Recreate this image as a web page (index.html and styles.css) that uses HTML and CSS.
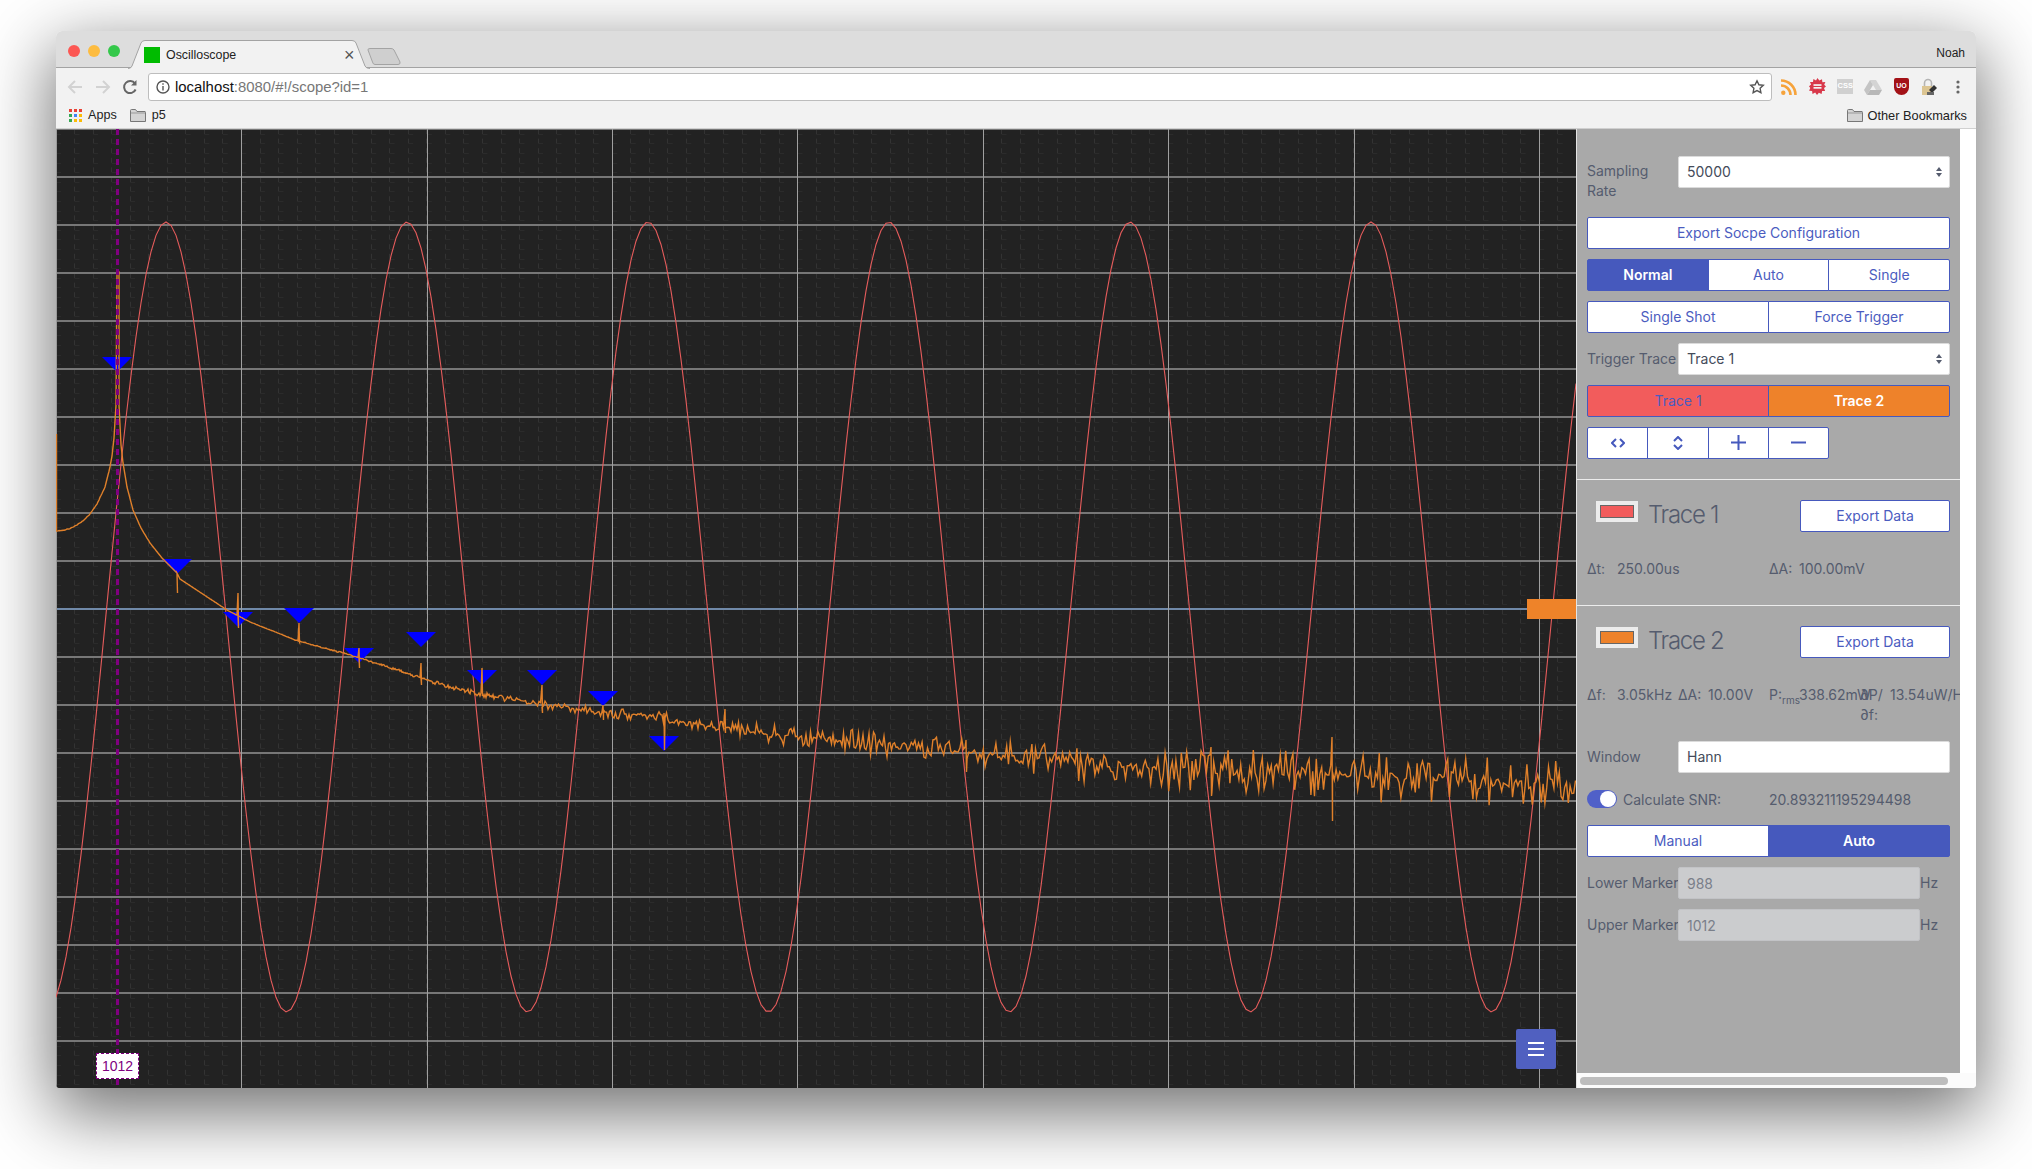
FILE: index.html

```html
<!DOCTYPE html>
<html lang="en">
<head>
  <meta charset="UTF-8" />
  <title>Oscilloscope</title>
  <link rel="stylesheet" href="styles.css">
</head>
<body>

  <div class="window">

    <!-- Tab strip -->
    <div class="tabstrip">
      <div class="lights">
        <span class="light red"></span>
        <span class="light yellow"></span>
        <span class="light green"></span>
      </div>
      <div class="tab">
        <svg class="tab-shape" width="242" height="29" viewBox="0 0 242 29">
          <path d="M0 28.5 Q3 28.5 4 26 L13 3 Q14 .5 17 .5 L224 .5 Q227 .5 228 3 L237 26 Q238 28.5 242 28.5" fill="#f2f2f2" stroke="#a3a3a3" />
        </svg>
        <span class="favicon"></span>
        <span class="tab-title">Oscilloscope</span>
        <span class="tab-close">×</span>
      </div>
      <svg class="new-tab" width="34" height="17" viewBox="0 0 34 17">
        <path d="M1 2 Q.6 .5 3 .5 L24 .5 Q26 .5 27 2 L33 14 Q33.6 16.5 31 16.5 L8 16.5 Q6 16.5 5.5 14 Z" fill="#cfcfcf" stroke="#a3a3a3" />
      </svg>
      <span class="profile">Noah</span>
    </div>

    <!-- Address bar -->
    <div class="toolbar">
      <div class="nav">
        <svg width="18" height="18" viewBox="0 0 18 18" fill="none" stroke="#d2d2d2" stroke-width="2"><path d="M16 9H3M9 3L3 9l6 6" /></svg>
        <svg width="18" height="18" viewBox="0 0 18 18" fill="none" stroke="#d2d2d2" stroke-width="2"><path d="M2 9h13M9 3l6 6-6 6" /></svg>
        <svg width="18" height="18" viewBox="0 0 18 18" fill="none" stroke="#666" stroke-width="2"><path d="M14.6 11.5A6 6 0 1 1 14 5.6" /><path d="M15.5 2v5.5H10" fill="#666" stroke="none" /></svg>
      </div>
      <div class="omnibox">
        <svg width="14" height="14" viewBox="0 0 14 14" fill="none" stroke="#555" stroke-width="1.4"><circle cx="7" cy="7" r="6" /><path d="M7 6v4.5M7 3.2v1.6" /></svg>
        <span class="url"><b>localhost</b>:8080/#!/scope?id=1</span>
        <svg class="star" width="16" height="16" viewBox="0 0 16 16" fill="none" stroke="#555" stroke-width="1.4"><path d="M8 1.8l1.9 4 4.4.5-3.2 3 .8 4.4L8 11.6l-3.9 2.1.8-4.4-3.2-3 4.4-.5z" /></svg>
      </div>
      <div class="extensions">
        <svg width="16" height="16" viewBox="0 0 16 16" fill="none" stroke="#f6a33b" stroke-width="2.6"><path d="M0 6.5A9.5 9.5 0 0 1 9.5 16M0 1.5A14.5 14.5 0 0 1 14.5 16" /><circle cx="2.3" cy="13.7" r="2.2" fill="#f6a33b" stroke="none" /></svg>
        <svg width="17" height="17" viewBox="0 0 17 17"><path d="M8.5 0l1.8 2.6L13 1.2l.4 3 3-.2-1.2 2.8 1.8 1.7-2 1.6 1.1 2.8-3 .1-.5 3-2.7-1.3-1.9 2.3-1.8-2.4-2.7 1.3-.4-3-3-.2 1.2-2.8L0 8.3l2.1-1.7L1 3.9l3 .1.4-3L7 2.5z" fill="#d8384a" /><rect x="4.5" y="6.2" width="8" height="1.7" fill="#f4f4f4" /><rect x="4.5" y="9" width="8" height="1.7" fill="#f4f4f4" /></svg>
        <span class="ext-css">CSS</span>
        <svg width="18" height="16" viewBox="0 0 18 16"><path d="M6 1h6l6 10h-6z" fill="#d4d4d4" /><path d="M6 1l3 5-6 10-3-5z" fill="#c4c4c4" /><path d="M6 11h12l-3 5H3z" fill="#b8b8b8" /></svg>
        <span class="ext-shield">UO</span>
        <svg width="17" height="18" viewBox="0 0 17 18"><path d="M3.5 8V5a3.5 3.5 0 0 1 7 0v3" fill="none" stroke="#b4b4b4" stroke-width="1.6" /><rect x="1" y="8" width="10" height="9" fill="#dcc592" /><path d="M8 12l5-5 3 3-5 5z" fill="#333" /><rect x="6" y="14" width="7" height="3" fill="#666" /></svg>
        <svg width="4" height="14" viewBox="0 0 4 14" fill="#666"><circle cx="2" cy="2" r="1.6" /><circle cx="2" cy="7" r="1.6" /><circle cx="2" cy="12" r="1.6" /></svg>
      </div>
    </div>

    <!-- Bookmarks -->
    <div class="bookmarks">
      <span class="bookmark">
        <svg width="13" height="13" viewBox="0 0 13 13">
          <rect width="3" height="3" fill="#e94235" /><rect x="5" width="3" height="3" fill="#e94235" /><rect x="10" width="3" height="3" fill="#e94235" />
          <rect y="5" width="3" height="3" fill="#34a853" /><rect x="5" y="5" width="3" height="3" fill="#4285f4" /><rect x="10" y="5" width="3" height="3" fill="#fbbc05" />
          <rect y="10" width="3" height="3" fill="#34a853" /><rect x="5" y="10" width="3" height="3" fill="#fbbc05" /><rect x="10" y="10" width="3" height="3" fill="#fbbc05" />
        </svg>
        Apps
      </span>
      <span class="bookmark">
        <svg width="16" height="13" viewBox="0 0 16 13"><path d="M.5 12.5V1.5Q.5.5 1.5.5h4l1.5 2h8q.5 0 .5 1v9z" fill="#d4d4d4" stroke="#777" /><path d="M1 4h14" stroke="#999" /></svg>
        p5
      </span>
      <span class="bookmark other">
        <svg width="16" height="13" viewBox="0 0 16 13"><path d="M.5 12.5V1.5Q.5.5 1.5.5h4l1.5 2h8q.5 0 .5 1v9z" fill="#d4d4d4" stroke="#777" /><path d="M1 4h14" stroke="#999" /></svg>
        Other Bookmarks
      </span>
    </div>

    <div class="app">

      <!-- Scope display -->
      <div class="scope">
        <canvas id="scope" width="1520" height="959"></canvas>
        <div class="marker-label">1012</div>
        <div class="trigger-handle"></div>
        <button class="menu-btn">
          <svg width="16" height="14" viewBox="0 0 16 14" fill="none" stroke="#fff" stroke-width="2"><path d="M0 1h16M0 7h16M0 13h16" /></svg>
        </button>
      </div>

      <!-- Settings -->
      <div class="side">
        <div class="side-body">
          <div class="panel">

            <div class="section section-top">
              <div class="row row-tall">
                <label class="label">Sampling Rate</label>
                <div class="select">50000</div>
              </div>
              <div class="row"><button class="btn">Export Socpe Configuration</button></div>
              <div class="row">
                <button class="btn active">Normal</button>
                <button class="btn">Auto</button>
                <button class="btn">Single</button>
              </div>
              <div class="row">
                <button class="btn">Single Shot</button>
                <button class="btn">Force Trigger</button>
              </div>
              <div class="row">
                <label class="label nowrap">Trigger Trace</label>
                <div class="select">Trace 1</div>
              </div>
              <div class="row">
                <button class="btn trace-red">Trace 1</button>
                <button class="btn trace-orange">Trace 2</button>
              </div>
              <div class="row row-icons">
                <button class="btn">
                  <svg width="14" height="10" viewBox="0 0 14 10" fill="none" stroke="#4659bd" stroke-width="2"><path d="M5 1L1 5l4 4M9 1l4 4-4 4" /></svg>
                </button>
                <button class="btn">
                  <svg width="10" height="14" viewBox="0 0 10 14" fill="none" stroke="#4659bd" stroke-width="2"><path d="M1 5l4-4 4 4M1 9l4 4 4-4" /></svg>
                </button>
                <button class="btn">
                  <svg width="15" height="15" viewBox="0 0 15 15" fill="none" stroke="#4659bd" stroke-width="2"><path d="M0 7.5h15M7.5 0v15" /></svg>
                </button>
                <button class="btn">
                  <svg width="15" height="3" viewBox="0 0 15 3" fill="none" stroke="#4659bd" stroke-width="2"><path d="M0 1.5h15" /></svg>
                </button>
              </div>
            </div>

            <div class="section section-trace1">
              <div class="trace-head">
                <span class="swatch swatch-red"></span>
                <h2>Trace 1</h2>
                <button class="btn btn-export">Export Data</button>
              </div>
              <div class="stats">
                <span class="stat-key">Δt:</span><span class="stat-val">250.00us</span>
                <span class="stat-key stat-skip">ΔA:</span><span class="stat-val">100.00mV</span>
              </div>
            </div>

            <div class="section section-trace2">
              <div class="trace-head">
                <span class="swatch swatch-orange"></span>
                <h2>Trace 2</h2>
                <button class="btn btn-export">Export Data</button>
              </div>
              <div class="stats">
                <span class="stat-key">Δf:</span><span class="stat-val">3.05kHz</span>
                <span class="stat-key">ΔA:</span><span class="stat-val">10.00V</span>
                <span class="stat-key">P:<sub>rms</sub></span><span class="stat-val">338.62mW</span>
                <span class="stat-key">∂P/∂f:</span><span class="stat-val">13.54uW/Hz</span>
              </div>
              <div class="row">
                <label class="label">Window</label>
                <div class="select plain">Hann</div>
              </div>
              <div class="row row-snr">
                <span class="switch"></span>
                <span class="snr-label">Calculate SNR:</span>
                <span class="snr-val">20.893211195294498</span>
              </div>
              <div class="row">
                <button class="btn">Manual</button>
                <button class="btn active">Auto</button>
              </div>
              <div class="row">
                <label class="label nowrap">Lower Marker</label>
                <input class="marker-input" value="988" disabled />
                <span class="unit">Hz</span>
              </div>
              <div class="row">
                <label class="label nowrap">Upper Marker</label>
                <input class="marker-input" value="1012" disabled />
                <span class="unit">Hz</span>
              </div>
            </div>

          </div>
          <div class="gutter"></div>
        </div>
        <div class="hscroll"><div class="hscroll-thumb"></div></div>
      </div>

    </div>
  </div>

  <script src="script.js"></script>
</body>
</html>
```

FILE: styles.css

```css
* { margin: 0; padding: 0; box-sizing: border-box; }
html, body {
  height: 100%;
  overflow: hidden;
  background: #fff;
}
body {
  padding: 31px 56px 0;
  font-family: "Liberation Sans", Arial, sans-serif;
}
.window {
  width: 1920px;
  height: 1057px;
  border-radius: 6px 6px 4px 4px;
  overflow: hidden;
  box-shadow: 0 22px 70px 4px rgba(0, 0, 0, 0.56);
}

/* browser chrome */
.tabstrip {
  display: flex;
  align-items: flex-start;
  height: 37px;
  background: #dddddd;
  border-bottom: 1px solid #a3a3a3;
}
.lights {
  display: flex;
  gap: 8px;
  padding: 14px 0 0 12px;
}
.light {
  width: 12px;
  height: 12px;
  border-radius: 50%;
}
.light.red { background: #fc5753; }
.light.yellow { background: #fdbc40; }
.light.green { background: #34c84a; }
.tab {
  position: relative;
  display: flex;
  align-items: center;
  width: 242px;
  height: 29px;
  margin: 9px 0 0 8px;
  padding: 0 0 0 16px;
  font-size: 12.4px;
  color: #222;
}
.tab-shape {
  position: absolute;
  top: 0; left: 0;
}
.favicon {
  position: relative;
  width: 16px;
  height: 16px;
  background: #00bb00;
}
.tab-title {
  position: relative;
  margin-left: 6px;
}
.tab-close {
  position: absolute;
  left: 216px;
  top: 5px;
  font-size: 18px;
  line-height: 20px;
  color: #555;
}
.new-tab {
  margin: 17px 0 0 -3px;
}
.profile {
  margin-left: auto;
  padding: 15px 11px 0 0;
  font-size: 12px;
  color: #222;
}
.toolbar {
  display: flex;
  align-items: center;
  height: 37px;
  background: #f2f2f2;
}
.nav {
  display: flex;
  align-items: center;
  gap: 10px;
  width: 92px;
  padding-left: 10px;
}
.nav svg:last-child { margin-left: -1px; }
.omnibox {
  display: flex;
  align-items: center;
  gap: 5px;
  width: 1624px;
  height: 28px;
  padding: 0 6px 0 7px;
  background: #fff;
  border: 1px solid #bdbdbd;
  border-radius: 3px;
}
.url {
  font-size: 14.9px;
  color: #777;
}
.url b {
  font-weight: normal;
  color: #111;
}
.star { margin-left: auto; }
.extensions {
  display: grid;
  grid-template-columns: repeat(7, 28.1px);
  justify-items: center;
  align-items: center;
  flex: none;
  padding-left: 3px;
}
.ext-css {
  width: 16px;
  height: 15px;
  background: #d0d0d0;
  color: #fff;
  font-size: 7.5px;
  font-weight: bold;
  line-height: 14px;
  text-align: center;
}
.ext-shield {
  width: 15px;
  height: 17px;
  background: #a31217;
  border-radius: 2px 2px 8px 8px;
  color: #fff;
  font-size: 7px;
  font-weight: bold;
  line-height: 15px;
  text-align: center;
}
.bookmarks {
  display: flex;
  align-items: center;
  gap: 13px;
  height: 24px;
  padding: 0 9px 3px 13px;
  background: #f2f2f2;
  border-bottom: 1px solid #d0d0d0;
  font-size: 12.6px;
  color: #222;
}
.bookmark {
  display: flex;
  align-items: center;
  gap: 6px;
}
.bookmark.other {
  margin-left: auto;
  gap: 4px;
  font-size: 12.8px;
}

/* main area */
.app {
  display: flex;
  height: 959px;
}
.scope {
  position: relative;
  width: 1520px;
  height: 959px;
  background: #222;
}
.scope canvas { display: block; }
.marker-label {
  position: absolute;
  left: 40px;
  top: 924px;
  width: 43px;
  height: 26px;
  background: #fff;
  border: 1px dashed #800080;
  color: #800080;
  font-size: 14px;
  line-height: 25px;
  text-align: center;
}
.trigger-handle {
  position: absolute;
  right: 0;
  top: 470px;
  width: 49px;
  height: 20px;
  background: #ee8329;
}
.menu-btn {
  position: absolute;
  left: 1460px;
  top: 900px;
  display: flex;
  align-items: center;
  justify-content: center;
  width: 40px;
  height: 40px;
  background: #5060c0;
  border: none;
  border-radius: 2px;
}

/* settings panel */
.side {
  display: flex;
  flex-direction: column;
  width: 400px;
  background: #fbfbfb;
  border-left: 1px solid #e4e4e4;
}
.side-body {
  display: flex;
  height: 944px;
}
.panel {
  width: 383px;
  height: 944px;
  overflow: hidden;
  background: #a9a9a9;
  font-family: Inter, "Liberation Sans", sans-serif;
  font-size: 14px;
  color: #555c6e;
}
.gutter {
  flex: 1;
  background: #fff;
}
.hscroll {
  padding: 4px 28px 0 3px;
}
.hscroll-thumb {
  height: 8px;
  background: #bdbdbd;
  border-radius: 4px;
}
.section {
  width: 383px;
  padding: 20px 10px 10px;
  border-bottom: 1px solid #ececec;
}
.section-top {
  height: 351px;
  padding-top: 27px;
}
.section-trace1 { height: 126px; }
.section-trace2 { border-bottom: none; }
.row {
  display: flex;
  align-items: flex-start;
  height: 32px;
  margin-bottom: 10px;
}
.row-tall { height: 51px; }
.label {
  flex: none;
  width: 91px;
  padding-top: 6px;
  line-height: 20px;
}
.row-tall .label { padding-top: 5px; }
.nowrap {
  white-space: nowrap;
}
.select {
  position: relative;
  flex: 1;
  height: 32px;
  padding-left: 8px;
  background: #fff;
  border: 1px solid #dbdbdb;
  border-radius: 2px;
  color: #444b5a;
  line-height: 29px;
}
.select::before,
.select::after {
  content: "";
  position: absolute;
  right: 7px;
  border-left: 3.5px solid transparent;
  border-right: 3.5px solid transparent;
}
.select::before {
  top: 10px;
  border-bottom: 4px solid #555c6e;
}
.select::after {
  top: 16px;
  border-top: 4px solid #555c6e;
}
.select.plain::before,
.select.plain::after { display: none; }
.btn {
  display: flex;
  align-items: center;
  justify-content: center;
  flex: 1;
  height: 32px;
  padding-bottom: 1px;
  background: #fff;
  border: 1px solid #4659bd;
  margin-left: -1px;
  font-family: inherit;
  font-size: 14px;
  color: #4b5cc0;
}
.btn:first-child {
  margin-left: 0;
  border-radius: 2px 0 0 2px;
}
.btn:last-child { border-radius: 0 2px 2px 0; }
.btn:only-child { border-radius: 2px; }
.btn.active {
  background: #4659bd;
  color: #fff;
  font-weight: 600;
}
.btn.trace-red { background: #f25c5c; }
.btn.trace-orange {
  background: #ee822a;
  color: #fff;
  font-weight: 600;
}
.row-icons { width: 242px; }
.trace-head {
  display: flex;
  align-items: flex-start;
  height: 32px;
}
.swatch {
  width: 42px;
  height: 21px;
  margin: 1px 0 0 9px;
  border: 4px solid #ececec;
  box-shadow: inset 0 0 0 1px #666;
}
.swatch-red { background: #f25c5c; }
.swatch-orange { background: #ee822a; }
.trace-head h2 {
  margin-left: 10px;
  font-size: 24px;
  font-weight: 300;
  line-height: 30px;
  letter-spacing: -1.3px;
  color: #555c6e;
}
.btn.btn-export {
  flex: none;
  width: 150px;
  margin-left: auto;
  border-radius: 2px;
}
.stats {
  display: flex;
  width: 372px;
  margin: 27px 0 16px;
  line-height: 20px;
  white-space: normal;
}
.stat-key {
  flex: none;
  width: 30px;
}
.stat-key sub {
  font-size: 10px;
  line-height: 0;
}
.stat-val {
  flex: none;
  width: 61px;
  white-space: nowrap;
}
.stat-skip { margin-left: 91px; }
.row-snr {
  align-items: center;
  height: 18px;
  margin: 17px 0;
}
.switch {
  position: relative;
  width: 30px;
  height: 18px;
  background: #5060c8;
  border-radius: 9px;
}
.switch::after {
  content: "";
  position: absolute;
  top: 1px;
  right: 1px;
  width: 16px;
  height: 16px;
  background: #fff;
  border-radius: 50%;
}
.snr-label {
  width: 146px;
  margin-left: 6px;
}
.marker-input {
  width: 242px;
  height: 32px;
  padding-left: 8px;
  background: #cbccce;
  border: 1px solid #c2c3c6;
  border-radius: 2px;
  font-family: inherit;
  font-size: 14px;
  color: #7a7f8a;
}
.unit {
  padding-top: 6px;
  line-height: 20px;
}
```

FILE: script.js

```js
// draws the grid, both traces and the peak markers onto the scope canvas
var canvas = document.getElementById('scope');
var ctx = canvas.getContext('2d');
var W = canvas.width, H = canvas.height;
var OX = 56, OY = 129; // page position of the canvas, the numbers below are page coords

var seed = 1012;
function rand() {
  seed = (seed + 0x6D2B79F5) | 0;
  var t = Math.imul(seed ^ (seed >>> 15), 1 | seed);
  t = (t + Math.imul(t ^ (t >>> 7), 61 | t)) ^ t;
  return ((t ^ (t >>> 14)) >>> 0) / 4294967296;
}

function drawGrid() {
  var x, y;
  ctx.fillStyle = '#222';
  ctx.fillRect(0, 0, W, H);

  // faint minor dashes
  ctx.lineWidth = 1;
  ctx.strokeStyle = '#333';
  ctx.setLineDash([5, 4.6]);
  for (x = 241 - OX - 185.4; x < W; x += 18.54) {
    ctx.beginPath();
    ctx.moveTo(Math.round(x) + 0.5, 0);
    ctx.lineTo(Math.round(x) + 0.5, H);
    ctx.stroke();
  }
  ctx.strokeStyle = '#2b2b2b';
  ctx.setLineDash([5, 13.54]);
  for (y = 4.8; y < H; y += 9.6) {
    ctx.beginPath();
    ctx.moveTo(0, Math.round(y) + 0.5);
    ctx.lineTo(W, Math.round(y) + 0.5);
    ctx.stroke();
  }
  ctx.setLineDash([]);

  // major lines
  for (y = 129; y < OY + H; y += 48) {
    ctx.fillStyle = y === 609 ? '#7089a8' : '#777';
    ctx.fillRect(0, y - OY - 1, W, 2);
  }
  ctx.fillStyle = '#a0a0a0';
  for (x = 241.4; x < OX + W; x += 185.35) {
    ctx.fillRect(Math.round(x) - OX, 0, 1, H);
  }
  ctx.fillStyle = '#999';
  ctx.fillRect(0, 0, 1, H);
}

function drawSine() {
  ctx.strokeStyle = '#e65c5c';
  ctx.lineWidth = 1.1;
  ctx.beginPath();
  for (var x = 56; x <= 1577; x += 5) {
    var y = 617 - 395 * Math.cos(2 * Math.PI * (x - 166) / 241);
    if (x === 56) ctx.moveTo(x - OX, y - OY);
    else ctx.lineTo(x - OX, y - OY);
  }
  ctx.stroke();
}

// spectrum outline, [x, y]
var curve = [
  [57, 531], [62, 530.5], [70, 528.5], [75, 526], [83, 521], [90, 514], [97, 504], [105, 487],
  [110, 467], [112, 456], [114, 438], [116, 405],
  [119, 405], [121, 445], [123, 463], [127, 487], [133, 510], [141, 528], [150, 543], [162, 558],
  [177, 573], [180, 579], [227, 610],
  [250, 622], [283, 635], [295, 640], [350, 655], [400, 671], [440, 684], [480, 694],
  [540, 704], [600, 712], [640, 715], [700, 725], [760, 733], [860, 742], [966, 752],
  [1100, 766], [1200, 771], [1350, 775], [1577, 785]
];
// noise size along x
var noise = [[190, 0], [300, 0.3], [400, 1], [500, 2.5], [640, 4.5], [800, 8], [960, 11], [1100, 14], [1250, 18], [1577, 20]];
// harmonics: x, top, bottom
var spikes = [
  [177, 573, 593], [238, 593, 628], [299, 623, 642], [359, 648, 668], [421, 663, 685],
  [482, 668, 695], [542, 685, 713], [603, 705, 720], [664, 713, 750], [725, 709, 733],
  [966, 740, 772], [1211, 747, 796], [1332, 737, 821]
];

function lerp(table, x) {
  for (var i = 1; i < table.length; i++) {
    if (x <= table[i][0]) {
      var a = table[i - 1], b = table[i];
      return a[1] + (b[1] - a[1]) * (x - a[0]) / (b[0] - a[0]);
    }
  }
  return table[table.length - 1][1];
}

function drawSpectrum() {
  ctx.strokeStyle = '#e0802a';
  ctx.lineWidth = 1.4;
  ctx.beginPath();
  ctx.moveTo(0.5, 434 - OY);
  ctx.lineTo(0.5, 531 - OY);
  var x = 57, s = 0;
  while (x <= 1577) {
    var amp = lerp(noise, x);
    var r = rand() * 2 - 1;
    var y = lerp(curve, x) + amp * r * Math.abs(r) * 1.3 + amp * 0.2 * (rand() - 0.5);
    var hit = null;
    for (var i = s; i < spikes.length; i++) {
      if (x >= spikes[i][0] && x < spikes[i][0] + 3) { hit = spikes[i]; s = i + 1; break; }
    }
    if (hit) {
      ctx.lineTo(hit[0] - OX, hit[1] - OY);
      ctx.lineTo(hit[0] - OX + 0.5, hit[2] - OY);
    }
    ctx.lineTo(x - OX, y - OY);
    if (x === 116) {
      // main peak
      ctx.lineTo(117 - OX, 272 - OY);
      ctx.lineTo(119 - OX, 272 - OY);
      x = 119;
      ctx.lineTo(x - OX, 405 - OY);
    }
    x += x < 500 ? 1 : (x < 900 ? 1.5 : 1.8);
  }
  ctx.stroke();
}

function drawMarkers() {
  // x, top of the triangle
  var marks = [[117, 357], [177, 559], [238, 612], [299, 608], [359, 648],
    [421, 632], [482, 670], [542, 670], [603, 691], [664, 736]];
  ctx.fillStyle = '#0000ff';
  marks.forEach(function (m) {
    ctx.beginPath();
    ctx.moveTo(m[0] - 15 - OX, m[1] - OY);
    ctx.lineTo(m[0] + 15 - OX, m[1] - OY);
    ctx.lineTo(m[0] - OX, m[1] + 15 - OY);
    ctx.closePath();
    ctx.fill();
  });
}

function drawCursor() {
  ctx.strokeStyle = '#800080';
  ctx.lineWidth = 3;
  ctx.setLineDash([6, 4]);
  ctx.beginPath();
  ctx.moveTo(117.5 - OX, 0);
  ctx.lineTo(117.5 - OX, H);
  ctx.stroke();
  ctx.setLineDash([]);
}

drawGrid();
drawSine();
drawMarkers();
drawSpectrum();
drawCursor();
```
